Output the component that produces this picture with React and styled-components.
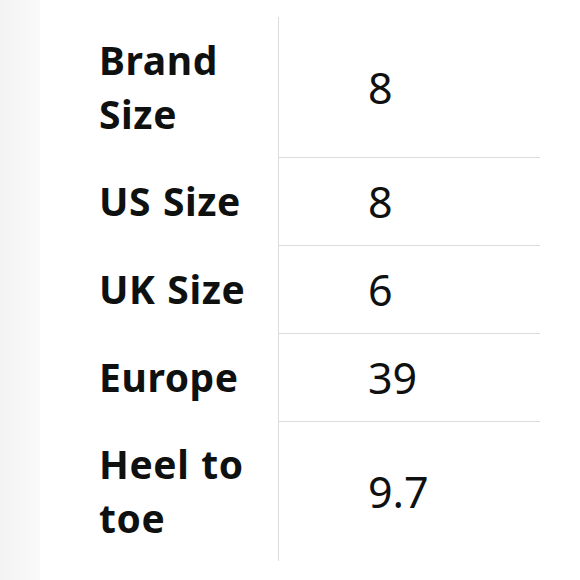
import React from "react";
import styled, { createGlobalStyle } from "styled-components";

const GlobalStyle = createGlobalStyle`
  html, body {
    margin: 0;
    padding: 0;
    background: #ffffff;
  }
  body {
    font-family: "Noto Sans", "Open Sans", sans-serif;
    color: #0f1111;
  }
`;

const Page = styled.div`
  display: flex;
  width: 580px;
  height: 580px;
  overflow: hidden;
`;

const Gutter = styled.div`
  width: 40px;
  flex: none;
  background: linear-gradient(to right, #f3f3f3, #f8f8f8 70%, #fafafa);
`;

const Panel = styled.div`
  flex: 1;
  background: #ffffff;
  padding-top: 17px;
`;

const Table = styled.div`
  display: grid;
  grid-template-columns: 238px 262px;
`;

const Label = styled.div`
  display: flex;
  align-items: center;
  min-height: 88px;
  padding: 16px 0 16px 59px;
  box-sizing: border-box;
  font-size: 39px;
  line-height: 54px;
  font-weight: 700;
  letter-spacing: 0.6px;
  word-spacing: 1px;
  color: #0f1111;
`;

const Value = styled.div`
  display: flex;
  align-items: center;
  padding-left: 89px;
  border-left: 1.5px solid #dcdcdc;
  border-top: ${(p) => (p.first ? "none" : "1.5px solid #dcdcdc")};
  font-size: 43px;
  font-weight: 400;
  color: #0f1111;
`;

const rows = [
  { label: ["Brand", "Size"], value: "8" },
  { label: ["US Size"], value: "8" },
  { label: ["UK Size"], value: "6" },
  { label: ["Europe"], value: "39" },
  { label: ["Heel to", "toe"], value: "9.7" },
];

export default function App() {
  return (
    <Page>
      <GlobalStyle />
      <Gutter />
      <Panel>
        <Table>
          {rows.map((row, i) => (
            <React.Fragment key={i}>
              <Label>
                <span>
                  {row.label.map((line, j) => (
                    <React.Fragment key={j}>
                      {j > 0 && <br />}
                      {line}
                    </React.Fragment>
                  ))}
                </span>
              </Label>
              <Value first={i === 0}>{row.value}</Value>
            </React.Fragment>
          ))}
        </Table>
      </Panel>
    </Page>
  );
}
